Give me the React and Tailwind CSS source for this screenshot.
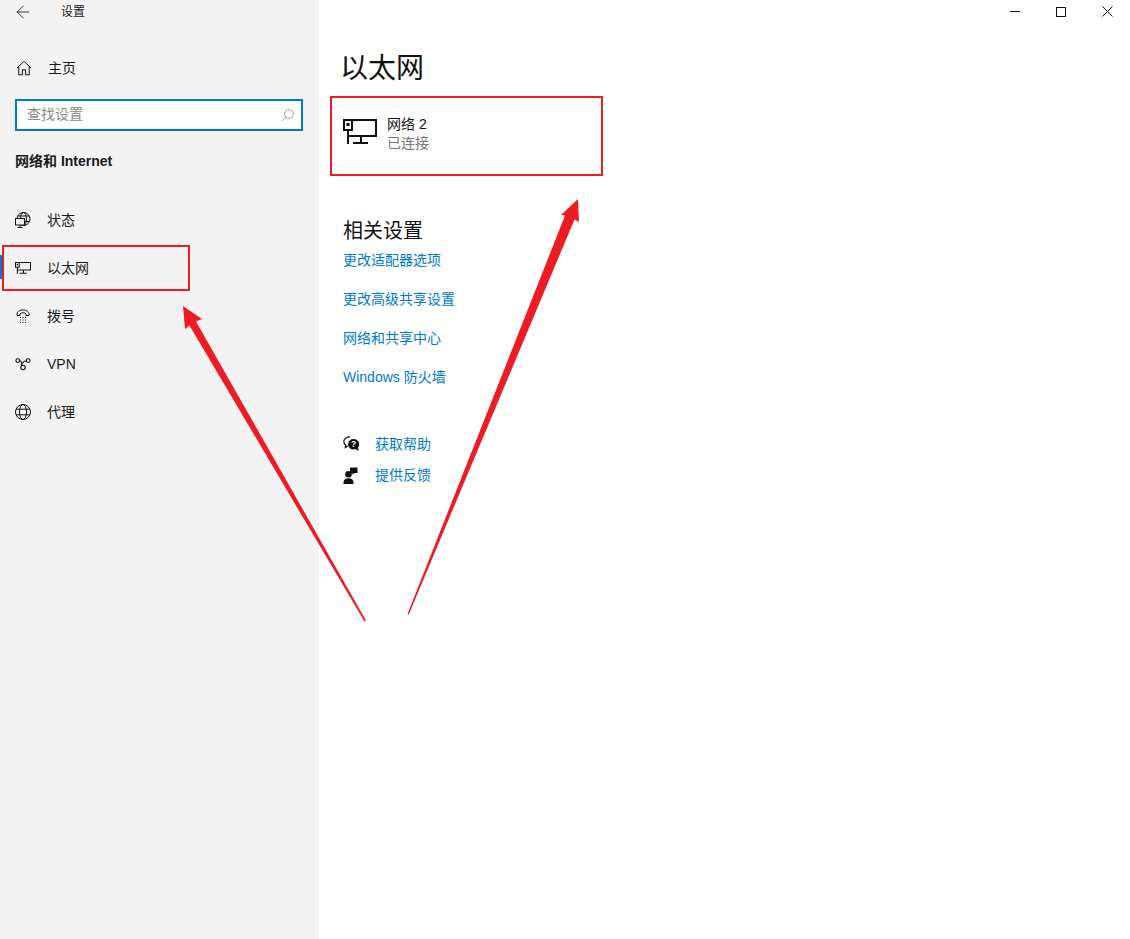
import { ArrowLeft } from "lucide-react";

function HomeIcon() {
  return (
    <svg width="16" height="16" viewBox="0 0 16 16" fill="none" stroke="#111" strokeWidth="1">
      <path d="M1 8.200 8 1.200l7 7" />
      <path d="M2.800 6.800v8h3.600v-5h3.200v5h3.600v-8" />
    </svg>
  );
}

function StatusIcon() {
  return (
    <svg width="16" height="16" viewBox="0 0 16 16" fill="none" stroke="#111" strokeWidth="1">
      <circle cx="8.500" cy="7" r="6.500" />
      <ellipse cx="8.500" cy="7" rx="3" ry="6.500" />
      <path d="M2.500 4h12M2.500 9.500h12" />
      <rect x="0.500" y="6.500" width="9" height="6.500" fill="#f3f3f3" />
      <path d="M5 13v2.500M2.500 15.500h5" />
    </svg>
  );
}

function EthernetIcon({ size = 16 }) {
  return (
    <svg width={size} height={(size * 26) / 34} viewBox="0 0 34 26" fill="none" stroke="#111" strokeWidth={size > 20 ? 2 : 2.200}>
      <path d="M9 1h24v16H5" />
      <rect x="1" y="1" width="8" height="10" />
      <path d="M5 11v14M18 17v7M10 24h15" />
      <rect x="3.500" y="4" width="3" height="3" fill="#111" stroke="none" />
    </svg>
  );
}

function DialIcon() {
  return (
    <svg width="16" height="16" viewBox="0 0 16 16" fill="none" stroke="#111" strokeWidth="1">
      <path d="M2 7.500V6C2 3.500 5 2 8 2s6 1.500 6 4v1.500h-3V5.800C10 5 9 4.800 8 4.800S6 5 5 5.800v1.700z" />
      <path d="M5 9.500h1M7.500 9.500h1M10 9.500h1M5 12h1M7.500 12h1M10 12h1M5 14.500h1M7.500 14.500h1M10 14.500h1" />
    </svg>
  );
}

function VpnIcon() {
  return (
    <svg width="16" height="14" viewBox="0 0 16 14" fill="none" stroke="#111" strokeWidth="1.100">
      <circle cx="2.800" cy="3.600" r="1.900" />
      <circle cx="13.200" cy="3.600" r="1.900" />
      <circle cx="8" cy="10.500" r="2.200" />
      <path d="M4.700 3.800c1.500 0 2 1.500 2.400 4.700M11.300 3.800C8.500 3.800 7.500 6 6 8" />
    </svg>
  );
}

function GlobeIcon() {
  return (
    <svg width="16" height="16" viewBox="0 0 16 16" fill="none" stroke="#111" strokeWidth="1">
      <circle cx="8" cy="8" r="7.500" />
      <ellipse cx="8" cy="8" rx="3.500" ry="7.500" />
      <path d="M1.200 5.200h13.600M1.200 10.800h13.600" />
    </svg>
  );
}

function HelpIcon() {
  return (
    <svg width="17" height="16" viewBox="0 0 17 16" fill="none">
      <path d="M7 .8C3.500.8 .8 2.800.8 5.600c0 1.500.8 2.800 2 3.600l-.5 2.300 2.600-1.600" stroke="#111" strokeWidth="1.200" />
      <path d="M10.500 3a5.300 5.300 0 0 0-3.600 9.200c1.600 1.300 3.800 1.500 5.400.8l3.400 2-.7-3.400A5.300 5.300 0 0 0 10.500 3z" fill="#111" />
      <text x="10.500" y="11.300" textAnchor="middle" fontSize="8.500" fontWeight="700" fill="#fff" fontFamily="Liberation Sans, sans-serif">?</text>
    </svg>
  );
}

function FeedbackIcon() {
  return (
    <svg width="15" height="17" viewBox="0 0 15 17" fill="#111">
      <circle cx="5.500" cy="7.300" r="3.300" />
      <path d="M.5 17v-1.500C.5 12.800 2.500 11.300 5.500 11.300s5 1.500 5 4.200V17z" />
      <path d="M7 .5h7.500v5.500h-3l-2 2V6H7z" />
    </svg>
  );
}

function NavItem({ icon, label, active }) {
  return (
    <div className="relative flex h-[48px] items-center text-[14px] text-[#1a1a1a]">
      {active && <span className="absolute left-0 top-[11px] h-[24px] w-[3px] bg-[#0078d7]" />}
      <span className="flex w-[47px] justify-start pl-[15px]">{icon}</span>
      <span>{label}</span>
    </div>
  );
}

function Link({ children, className = "" }) {
  return <div className={`text-[14px] leading-[20px] text-[#0078d7] ${className}`}>{children}</div>;
}

export default function App() {
  return (
    <div className="relative flex h-[939px] w-full overflow-hidden bg-white font-['Liberation_Sans','Noto_Sans_CJK_SC',sans-serif]">
      <aside className="flex w-[319px] shrink-0 flex-col bg-[#f3f3f3]">
        <div className="flex h-[23px] items-center pl-[13px] text-[12px] text-[#1a1a1a]">
          <ArrowLeft size={20} strokeWidth={1} color="#111" />
          <span className="ml-[28px]">设置</span>
        </div>
        <div className="mt-[21px] flex h-[48px] items-center text-[14px] text-[#1a1a1a]">
          <span className="flex w-[48px] pl-[16px]"><HomeIcon /></span>
          <span>主页</span>
        </div>
        <div className="ml-[15px] mt-[7px] flex h-[32px] w-[288px] items-center justify-between border-2 border-[#0078d7] bg-white pb-[2px] pl-[10px] pr-[7px] text-[14px] text-[#8a8a8a]">
          <span>查找设置</span>
          <svg width="13" height="13" viewBox="0 0 13 13" fill="none" stroke="#a0a0a0" strokeWidth="1" className="mt-[2px]">
            <circle cx="8" cy="5" r="4.300" />
            <path d="M5 8 .5 12.500" />
          </svg>
        </div>
        <div className="ml-[15px] mt-[20px] text-[14px] font-semibold leading-[20px] text-[#1a1a1a]">网络和 Internet</div>
        <div className="mt-[25px] flex flex-col">
          <NavItem icon={<StatusIcon />} label="状态" />
          <NavItem icon={<EthernetIcon />} label="以太网" active />
          <NavItem icon={<DialIcon />} label="拨号" />
          <NavItem icon={<VpnIcon />} label="VPN" />
          <NavItem icon={<GlobeIcon />} label="代理" />
        </div>
      </aside>

      <main className="flex min-w-0 flex-1 flex-col">
        <div className="flex h-[23px] justify-end text-[#111]">
          <div className="flex h-[23px] w-[46px] items-center justify-center">
            <span className="h-px w-[10px] bg-[#111]" />
          </div>
          <div className="flex h-[23px] w-[46px] items-center justify-center">
            <span className="h-[10px] w-[10px] border border-[#111]" />
          </div>
          <div className="flex h-[23px] w-[46px] items-center justify-center">
            <svg width="11" height="11" viewBox="0 0 11 11" stroke="#111" strokeWidth="1"><path d="M.5.500l10 10M10.500.500l-10 10" /></svg>
          </div>
        </div>
        <h1 className="ml-[21px] mt-[26px] text-[28px] leading-[40px] text-[#111]">以太网</h1>
        <div className="ml-[24px] mt-[9px] flex h-[78px] items-start">
          <div className="mt-[21px]"><EthernetIcon size={34} /></div>
          <div className="ml-[10px] mt-[17px] text-[14px] leading-[19px]">
            <div className="text-[#111]">网络 2</div>
            <div className="text-[#767676]">已连接</div>
          </div>
        </div>
        <h2 className="ml-[24px] mt-[41px] text-[20px] leading-[28px] text-[#111]">相关设置</h2>
        <div className="ml-[24px] mt-[5px] flex flex-col gap-[19px]">
          <Link>更改适配器选项</Link>
          <Link>更改高级共享设置</Link>
          <Link>网络和共享中心</Link>
          <Link>Windows 防火墙</Link>
        </div>
        <div className="ml-[24px] mt-[47px] flex flex-col gap-[11px]">
          <div className="flex items-center">
            <span className="flex w-[32px]"><HelpIcon /></span>
            <Link>获取帮助</Link>
          </div>
          <div className="flex items-center">
            <span className="flex w-[32px]"><FeedbackIcon /></span>
            <Link>提供反馈</Link>
          </div>
        </div>
      </main>

      {/* annotations drawn over the screenshot */}
      <div className="absolute left-[2px] top-[245px] h-[46px] w-[188px] border-2 border-[#ed1c24]" />
      <div className="absolute left-[330px] top-[96px] h-[80px] w-[273px] border-2 border-[#ed1c24]" />
      <svg className="pointer-events-none absolute left-0 top-0" width="1130" height="939" viewBox="0 0 1130 939">
        <path d="M183 306 202 319 196 321.500 366 620.500 364.500 621.500 189.500 325.500 185 329z" fill="#ed1c24" />
        <path d="M578 199 579 222 574.500 219.500 408.800 614.500 407.500 614 565 215.500 561 215z" fill="#ed1c24" />
      </svg>
    </div>
  );
}
